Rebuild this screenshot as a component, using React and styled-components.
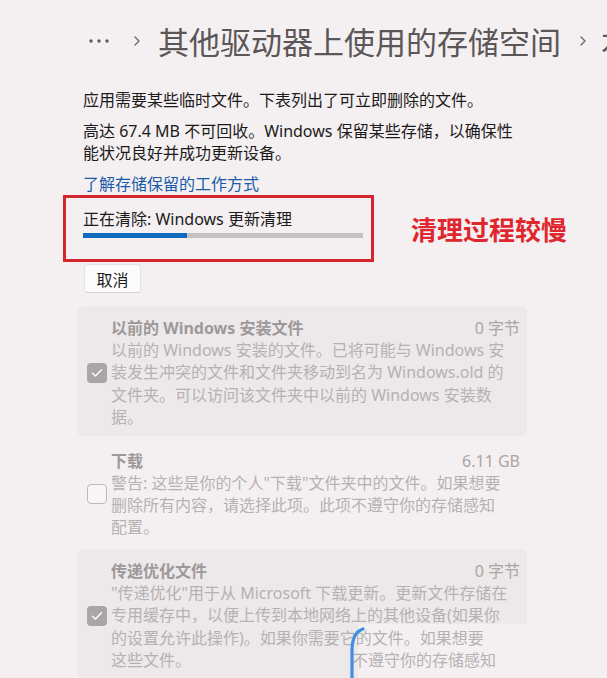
import React from 'react';
import styled, { createGlobalStyle } from 'styled-components';

const GlobalStyle = createGlobalStyle`
  html, body {
    margin: 0;
    padding: 0;
    background: #f4f0f1;
  }
  body {
    width: 607px;
    height: 678px;
    overflow: hidden;
    font-family: "Noto Sans", "Noto Sans CJK SC", sans-serif;
    color: #1b1a1a;
  }
`;

const Page = styled.div`
  padding: 20px 0 0 0;
  width: 607px;
  box-sizing: border-box;
`;

const Breadcrumb = styled.div`
  display: flex;
  align-items: center;
  height: 41px;
  padding-left: 88px;
  white-space: nowrap;
  overflow: hidden;
  color: #5b5657;
`;

const Dots = styled.svg`
  width: 22px;
  height: 6px;
  flex-shrink: 0;
`;

const Chevron = styled.svg`
  width: 8px;
  height: 12px;
  flex-shrink: 0;
  margin: 0 ${(p) => p.$right}px 0 ${(p) => p.$left}px;
`;

const Crumb = styled.span`
  font-family: "Noto Sans CJK SC", sans-serif;
  font-size: 31px;
  line-height: 41px;
  font-weight: 400;
  flex-shrink: 0;
`;

const Content = styled.div`
  padding-left: 83px;
`;

const Text = styled.p`
  margin: ${(p) => p.$top}px 0 0 0;
  font-size: 16px;
  line-height: 22px;
  width: 460px;
`;

const Link = styled.a`
  display: block;
  margin-top: 9px;
  font-size: 16px;
  line-height: 22px;
  color: #1a5aa8;
  text-decoration: none;
`;

const StatusRow = styled.div`
  display: flex;
  align-items: center;
  gap: 37px;
  margin-left: -20px;
`;

const HighlightBox = styled.div`
  width: 280px;
  border: 3px solid #d3262d;
  padding: 10px 8px 21px 17px;
  box-sizing: content-box;
  flex-shrink: 0;
`;

const StatusText = styled.div`
  font-size: 16px;
  line-height: 22px;
  white-space: nowrap;
`;

const Track = styled.div`
  margin-top: 3px;
  width: 280px;
  height: 5px;
  background: #c5c0c1;
`;

const Fill = styled.div`
  height: 100%;
  background: #0f6cbd;
`;

const Annotation = styled.span`
  font-family: "Noto Sans CJK SC", sans-serif;
  font-weight: 700;
  font-size: 26px;
  line-height: 34px;
  color: #e0262e;
  white-space: nowrap;
`;

const Button = styled.button`
  display: block;
  margin-top: 2px;
  margin-left: 1px;
  width: 57px;
  height: 29px;
  background: #fdfcfc;
  border: 1px solid #e6e2e3;
  border-bottom-color: #d6d2d3;
  border-radius: 4px;
  font-family: "Noto Sans CJK SC", sans-serif;
  font-size: 16px;
  color: #1b1a1a;
  padding: 0;
`;

const List = styled.div`
  display: flex;
  flex-direction: column;
  gap: 3px;
  margin: 13px 0 0 77px;
  width: 450px;
`;

const Card = styled.div`
  position: relative;
  display: flex;
  align-items: center;
  gap: 4px;
  padding: 11px 7px 7px 10px;
  border-radius: 6px;
  background: ${(p) => (p.$selected ? '#ede8e9' : 'transparent')};
`;

const Patch = styled.div`
  position: absolute;
  left: 281px;
  top: 75px;
  right: -14px;
  bottom: -20px;
  background: #f4f0f1;
`;

const Swoosh = styled.svg`
  position: absolute;
  left: 271px;
  top: 78px;
  width: 18px;
  height: 56px;
  z-index: 2;
`;

const Box = styled.div`
  width: 20px;
  height: 20px;
  flex-shrink: 0;
  box-sizing: border-box;
  border-radius: 4px;
  display: flex;
  align-items: center;
  justify-content: center;
  background: ${(p) => (p.$checked ? '#aaa5a6' : '#f8f5f6')};
  border: ${(p) => (p.$checked ? 'none' : '1px solid #bdb8b9')};
  position: relative;
  z-index: 1;
`;

const Body = styled.div`
  flex: 1;
  position: relative;
  z-index: 1;
`;

const Head = styled.div`
  display: flex;
  justify-content: space-between;
  font-size: 16px;
  line-height: 22px;
`;

const Title = styled.span`
  font-weight: 700;
  color: #9d9899;
`;

const Size = styled.span`
  color: #aaa5a6;
`;

const Line = styled.div`
  font-size: 16px;
  line-height: 22.4px;
  color: #b6b1b2;
  white-space: nowrap;
`;

const Gap = styled.span`
  display: inline-block;
  width: ${(p) => p.$w}px;
`;

const items = [
  {
    title: '以前的 Windows 安装文件',
    size: '0 字节',
    checked: true,
    selected: true,
    lines: [
      '以前的 Windows 安装的文件。已将可能与 Windows 安',
      '装发生冲突的文件和文件夹移动到名为 Windows.old 的',
      '文件夹。可以访问该文件夹中以前的 Windows 安装数',
      '据。',
    ],
  },
  {
    title: '下载',
    size: '6.11 GB',
    checked: false,
    selected: false,
    lines: [
      '警告: 这些是你的个人"下载"文件夹中的文件。如果想要',
      '删除所有内容，请选择此项。此项不遵守你的存储感知',
      '配置。',
    ],
  },
  {
    title: '传递优化文件',
    size: '0 字节',
    checked: true,
    selected: true,
    glitch: true,
    lines: [
      '"传递优化"用于从 Microsoft 下载更新。更新文件存储在',
      '专用缓存中，以便上传到本地网络上的其他设备(如果你',
      '的设置允许此操作)。如果你需要它的文件。如果想要',
      <>
        这些文件。<Gap $w={161} />不遵守你的存储感知
      </>,
    ],
  },
];

function CheckBox({ checked }) {
  return (
    <Box $checked={checked}>
      {checked && (
        <svg width="12" height="10" viewBox="0 0 12 10">
          <path d="M1.5 5.2 L4.5 8 L10.5 1.8" fill="none" stroke="#fff" strokeWidth="1.4" strokeLinecap="round" strokeLinejoin="round" />
        </svg>
      )}
    </Box>
  );
}

function ChevronIcon({ left, right }) {
  return (
    <Chevron $left={left} $right={right} viewBox="0 0 8 12">
      <path d="M2 2 L6 6 L2 10" fill="none" stroke="#6a6566" strokeWidth="1.3" strokeLinecap="round" strokeLinejoin="round" />
    </Chevron>
  );
}

export default function App() {
  return (
    <>
      <GlobalStyle />
      <Page>
        <Breadcrumb>
          <Dots viewBox="0 0 22 6">
            <circle cx="3" cy="3" r="1.7" fill="#5b5657" />
            <circle cx="11" cy="3" r="1.7" fill="#5b5657" />
            <circle cx="19" cy="3" r="1.7" fill="#5b5657" />
          </Dots>
          <ChevronIcon left={23} right={17} />
          <Crumb>其他驱动器上使用的存储空间</Crumb>
          <ChevronIcon left={18} right={14} />
          <Crumb>本地磁盘</Crumb>
        </Breadcrumb>

        <Content>
          <Text $top={28}>应用需要某些临时文件。下表列出了可立即删除的文件。</Text>
          <Text $top={9}>
            高达 67.4 MB 不可回收。Windows 保留某些存储，以确保性
            <br />
            能状况良好并成功更新设备。
          </Text>
          <Link href="#">了解存储保留的工作方式</Link>

          <StatusRow>
            <HighlightBox>
              <StatusText>正在清除: Windows 更新清理</StatusText>
              <Track>
                <Fill style={{ width: '37%' }} />
              </Track>
            </HighlightBox>
            <Annotation>清理过程较慢</Annotation>
          </StatusRow>

          <Button>取消</Button>
        </Content>

        <List>
          {items.map((item) => (
            <Card key={item.title} $selected={item.selected}>
              {item.glitch && (
                <>
                  <Patch />
                  <Swoosh viewBox="0 0 18 56">
                    <path d="M15 2 C8 4 4 12 4 24 L4 56" fill="none" stroke="#3d8fe3" strokeWidth="3.2" strokeLinecap="round" />
                  </Swoosh>
                </>
              )}
              <CheckBox checked={item.checked} />
              <Body>
                <Head>
                  <Title>{item.title}</Title>
                  <Size>{item.size}</Size>
                </Head>
                {item.lines.map((line, i) => (
                  <Line key={i}>{line}</Line>
                ))}
              </Body>
            </Card>
          ))}
        </List>
      </Page>
    </>
  );
}
